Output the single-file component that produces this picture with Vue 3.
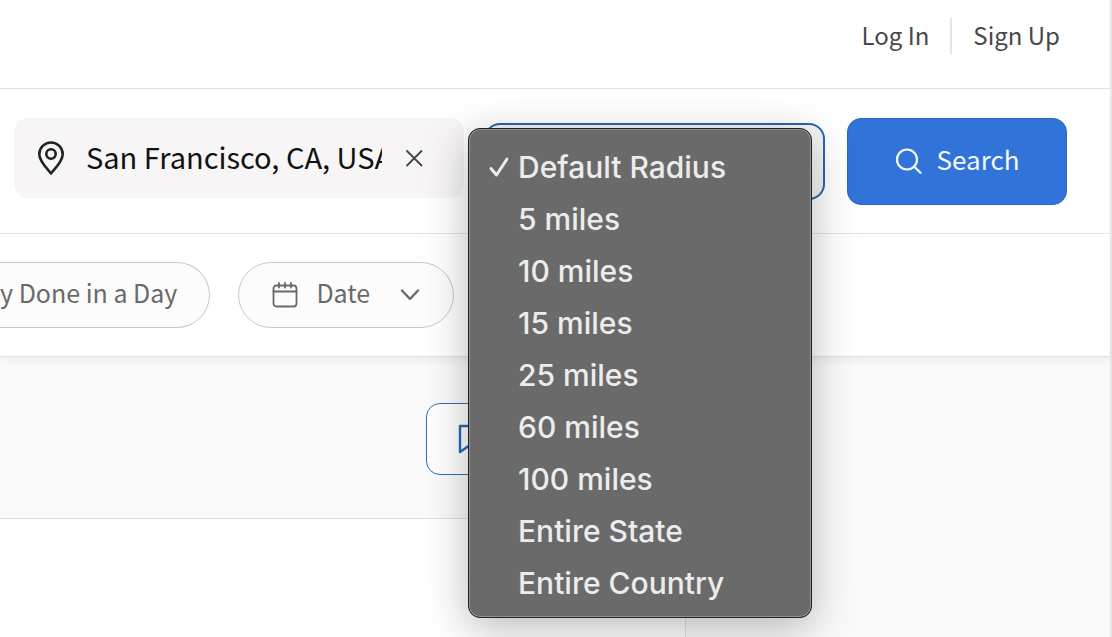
<template>
  <div class="page">
    <header class="top-bar">
      <nav class="account">
        <a href="#login">Log In</a>
        <a href="#signup">Sign Up</a>
      </nav>
    </header>

    <form class="search-row" @submit.prevent>
      <div class="location">
        <svg class="pin" width="30" height="36" viewBox="0 0 30 36" fill="none" stroke="currentColor" stroke-width="2.6" stroke-linejoin="round">
          <path d="M15 33.5C12 29.5 3.3 21.5 3.3 14.2a11.7 11.7 0 0 1 23.4 0C26.7 21.5 18 29.5 15 33.5z"/>
          <circle cx="15" cy="14" r="4.7"/>
        </svg>
        <input v-model="location" type="text" aria-label="Location">
        <button class="clear" type="button" aria-label="Clear location" @click="location = ''">
          <svg width="24" height="24" viewBox="0 0 24 24" fill="none" stroke="currentColor" stroke-width="1.8" stroke-linecap="round">
            <path d="M5 5l14.5 14.5M19.5 5L5 19.5"/>
          </svg>
        </button>
      </div>

      <div class="radius">
        <select v-model="radius" aria-label="Radius" @mousedown.prevent="isOpen = !isOpen">
          <option v-for="item in radiusOptions" :key="item" :value="item">{{ item }}</option>
        </select>
        <ul v-if="isOpen" class="menu" role="listbox" aria-label="Radius">
          <li
            v-for="item in radiusOptions"
            :key="item"
            class="menu-item"
            role="option"
            :aria-selected="item === radius"
            @click="selectRadius(item)"
          >
            <span class="check">
              <svg v-if="item === radius" width="22" height="22" viewBox="0 0 22 22" fill="none" stroke="currentColor" stroke-width="3" stroke-linecap="round" stroke-linejoin="round">
                <path d="M3 12.5l5.5 6.5L19 3"/>
              </svg>
            </span>
            {{ item }}
          </li>
        </ul>
      </div>

      <button class="search-btn" type="submit">
        <svg width="28" height="28" viewBox="0 0 28 28" fill="none" stroke="currentColor" stroke-width="2.2" stroke-linecap="round">
          <circle cx="12" cy="11.5" r="10"/>
          <path d="M19.2 18.7l6.3 6"/>
        </svg>
        <span class="label">Search</span>
      </button>
    </form>

    <div class="filters">
      <button class="chip chip-cut" type="button">
        <span class="label">y Done in a Day</span>
      </button>
      <button class="chip chip-date" type="button">
        <svg width="26" height="26" viewBox="0 0 26 26" fill="none" stroke="currentColor" stroke-width="1.8" stroke-linecap="round">
          <rect x="1.5" y="3.5" width="23" height="21" rx="3"/>
          <path d="M1.5 9.5h23M7 1v4.5M13 1v4.5M19 1v4.5"/>
        </svg>
        <span class="label">Date</span>
        <svg class="chevron" width="20" height="12" viewBox="0 0 20 12" fill="none" stroke="currentColor" stroke-width="2.4" stroke-linecap="round" stroke-linejoin="round">
          <path d="M2 1.5l8 8.5 8-8.5"/>
        </svg>
      </button>
    </div>

    <main class="results">
      <section class="list">
        <div class="list-toolbar">
          <button class="save-btn" type="button" aria-label="Save search">
            <svg width="24" height="30" viewBox="0 0 24 30" fill="none" stroke="currentColor" stroke-width="2.4" stroke-linejoin="round">
              <path d="M3 2h20v26l-10-7-10 7z"/>
            </svg>
          </button>
        </div>
      </section>
      <aside class="detail"></aside>
    </main>
  </div>
</template>

<script setup>
import { ref } from 'vue';

const radiusOptions = [
  'Default Radius',
  '5 miles',
  '10 miles',
  '15 miles',
  '25 miles',
  '60 miles',
  '100 miles',
  'Entire State',
  'Entire Country'
];

const location = ref('San Francisco, CA, USA');
const radius = ref('Default Radius');
const isOpen = ref(true);

function selectRadius(item) {
  radius.value = item;
  isOpen.value = false;
}
</script>

<style>
body {
  margin: 0;
}
</style>

<style scoped>
.page {
  display: flex;
  flex-direction: column;
  min-height: 100vh;
  box-sizing: border-box;
  border-right: 2px solid #e8e8e8;
  background: #fff;
  color: #484848;
  font-family: "Noto Sans CJK SC", "Noto Sans", sans-serif;
  font-size: 25px;
}

button,
input,
select {
  box-sizing: border-box;
  margin: 0;
  font: inherit;
}

button {
  cursor: pointer;
}

svg {
  flex: none;
}

/* the font sits low in its line box, lift it to the icons' centre */
.label {
  padding-bottom: 6px;
}

.top-bar {
  display: flex;
  justify-content: flex-end;
  align-items: flex-start;
  box-sizing: border-box;
  height: 89px;
  padding: 18px 29px;
  border-bottom: 1px solid #e2e2e2;
}

.account {
  display: flex;
  font-size: 24px;
  line-height: 34px;
}

.account a {
  padding: 0 21px 2px;
  color: inherit;
  text-decoration: none;
}

.account a + a {
  border-left: 2px solid #e4e4e4;
}

.search-row {
  display: grid;
  grid-template-columns: minmax(0, 1fr) 341px 242px;
  align-items: start;
  padding: 29px 43px 28px 14px;
  border-bottom: 1px solid #e6e6e6;
}

.location {
  display: flex;
  align-items: center;
  box-sizing: border-box;
  height: 80px;
  margin-right: 20px;
  padding: 0 38px 0 22px;
  border-radius: 14px;
  background: #f7f5f6;
}

.pin {
  color: #222;
}

.location input {
  flex: 1;
  min-width: 0;
  height: 48px;
  margin: 0 20px;
  padding: 0 0 4px;
  border: 0;
  outline: 0;
  background: transparent;
  color: #111;
  font-size: 29px;
}

.clear {
  display: flex;
  padding: 0;
  border: 0;
  background: none;
  color: #444;
}

.radius {
  position: relative;
  margin-top: 5px;
}

.radius select {
  display: block;
  width: 100%;
  height: 77px;
  padding: 0 24px;
  appearance: none;
  border: 2px solid #2468b0;
  border-radius: 16px;
  outline: 0;
  background: #f7f5f6;
  color: #111;
}

.menu {
  position: absolute;
  z-index: 10;
  top: 5px;
  right: 13px;
  left: -16px;
  margin: 0;
  padding: 12px 0 8px;
  border: 1px solid #222;
  border-radius: 12px;
  background: #6a6a6a;
  box-shadow: inset 0 0 0 1px #919191, 0 10px 44px rgba(0, 0, 0, 0.28);
  color: #ececec;
  font-family: Inter, "Liberation Sans", sans-serif;
  font-size: 30px;
  font-weight: 500;
  line-height: 52px;
  list-style: none;
}

.menu-item {
  display: flex;
  align-items: center;
  padding-left: 19px;
  white-space: nowrap;
  cursor: default;
}

.check {
  display: flex;
  width: 30px;
}

.search-btn {
  display: flex;
  align-items: center;
  justify-content: center;
  gap: 14px;
  height: 87px;
  margin-left: 22px;
  padding: 0;
  border: 1px solid #2468c4;
  border-radius: 14px;
  background: #3273d9;
  color: #f2faff;
  font-size: 26px;
}

.filters {
  position: relative;
  display: flex;
  gap: 28px;
  padding: 28px 0;
  border-bottom: 1px solid #e2e2e2;
  box-shadow: 0 3px 8px rgba(0, 0, 0, 0.06);
}

.chip {
  display: flex;
  align-items: center;
  height: 66px;
  border: 1px solid #c8c8c8;
  border-radius: 33px;
  background: #fcfcfc;
  color: #6a6a6a;
  white-space: nowrap;
}

.chip-cut {
  padding: 0 32px 0 0;
  border-left: 0;
  border-radius: 0 33px 33px 0;
}

.chip-date {
  gap: 18px;
  padding: 0 33px;
}

.chevron {
  margin-left: 12px;
}

.results {
  display: flex;
  flex: 1;
}

.list {
  flex: 0 0 685px;
  border-right: 1px solid #e2e2e2;
}

.list-toolbar {
  display: flex;
  justify-content: flex-end;
  padding: 46px 29px 43px;
  border-bottom: 1px solid #e2e2e2;
  background: #fafafa;
}

.save-btn {
  display: flex;
  align-items: center;
  width: 230px;
  height: 72px;
  padding: 0 30px;
  border: 1px solid #2a72b8;
  border-radius: 14px;
  background: #fff;
  color: #2468b8;
}

.detail {
  flex: 1;
  background: #fafafa;
}
</style>
